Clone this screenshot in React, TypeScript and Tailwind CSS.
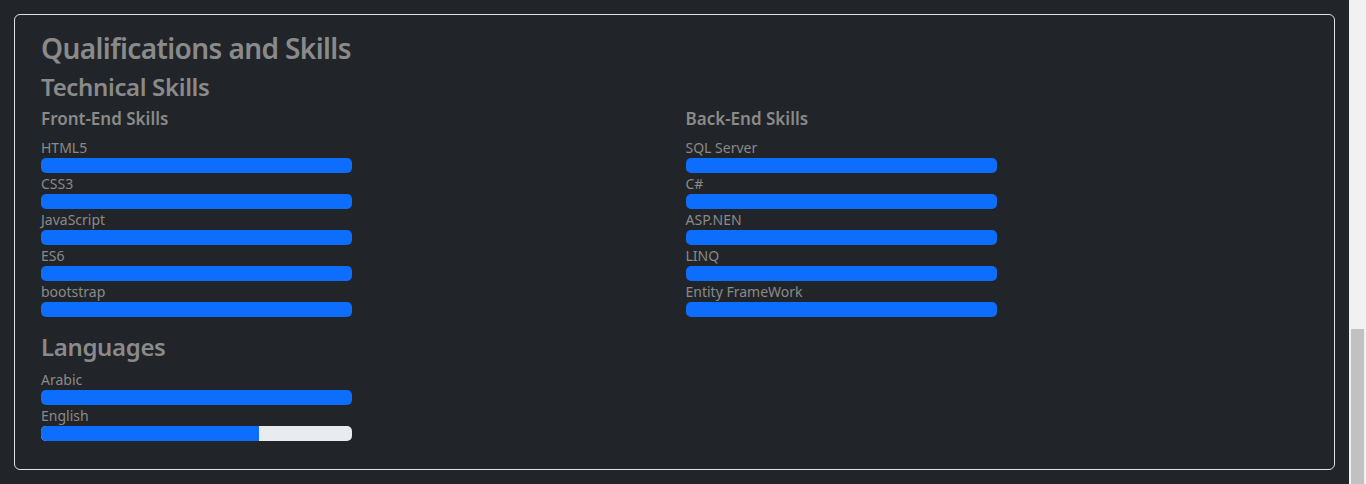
import React from 'react';

type Skill = { name: string; value: number };

const frontEnd: Skill[] = [
  { name: 'HTML5', value: 100 },
  { name: 'CSS3', value: 100 },
  { name: 'JavaScript', value: 100 },
  { name: 'ES6', value: 100 },
  { name: 'bootstrap', value: 100 },
];

const backEnd: Skill[] = [
  { name: 'SQL Server', value: 100 },
  { name: 'C#', value: 100 },
  { name: 'ASP.NEN', value: 100 },
  { name: 'LINQ', value: 100 },
  { name: 'Entity FrameWork', value: 100 },
];

const languages: Skill[] = [
  { name: 'Arabic', value: 100 },
  { name: 'English', value: 70 },
];

const SkillBar: React.FC<{ skill: Skill }> = ({ skill }) => (
  <div className="w-[311px]">
    <div className="text-[14px] leading-[20px] h-[20px]">{skill.name}</div>
    <div className="h-[15px] w-full bg-[#e9ecef] rounded-[5px] overflow-hidden flex mb-[1px]">
      <div className="h-full bg-[#0d6efd]" style={{ width: `${skill.value}%` }} />
    </div>
  </div>
);

const SkillList: React.FC<{ title: string; skills: Skill[] }> = ({ title, skills }) => (
  <div>
    <h5 className="text-[17px] leading-[22px] font-semibold mb-[8px]">{title}</h5>
    {skills.map((s) => (
      <SkillBar key={s.name} skill={s} />
    ))}
  </div>
);

export default function App() {
  return (
    <div
      className="flex w-full h-[484px] bg-[#212529] text-[#8a8a8a] overflow-hidden"
      style={{ fontFamily: '"Noto Sans", "Open Sans", sans-serif' }}
    >
      <div className="flex-1 pt-[14px] pl-[14px] pr-[14px]">
        <div className="border border-[#dee2e6] rounded-[6px] h-[456px] pl-[26px] pr-[28px] pt-[14px]">
          <h2 className="text-[28px] leading-[38px] font-semibold tracking-[-0.6px]">Qualifications and Skills</h2>
          <h3 className="text-[24px] leading-[34px] font-semibold tracking-[-0.35px] mt-[3px] mb-[4px]">Technical Skills</h3>
          <div className="grid grid-cols-2 gap-x-6">
            <SkillList title="Front-End Skills" skills={frontEnd} />
            <SkillList title="Back-End Skills" skills={backEnd} />
          </div>
          <h3 className="text-[24px] leading-[34px] font-semibold tracking-[-0.35px] mt-[12px] mb-[6px]">Languages</h3>
          {languages.map((s) => (
            <SkillBar key={s.name} skill={s} />
          ))}
        </div>
      </div>
      <div className="w-[17px] bg-[#f1f1f1] flex flex-col justify-end px-[2px]">
        <div className="h-[155px] bg-[#c1c1c1]" />
      </div>
    </div>
  );
}
